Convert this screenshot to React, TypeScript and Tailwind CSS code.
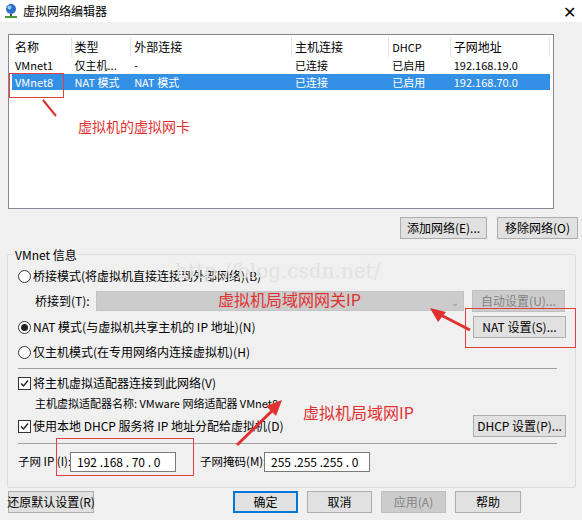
import React from "react";

const F = { fontFamily: '"Microsoft YaHei","Noto Sans CJK SC","Noto Sans",sans-serif' };

function Btn({ children, w, disabled, def }: { children: React.ReactNode; w: number; disabled?: boolean; def?: boolean }) {
  return (
    <div
      style={{ width: w }}
      className={`h-[22px] whitespace-nowrap flex items-center justify-center text-[12px] border ${def ? "border-[#0078d7] border-2" : "border-[#adadad]"} ${disabled ? "bg-[#cccccc] text-[#838383] border-[#bfbfbf]" : "bg-[#e1e1e1] text-black"}`}
    >
      {children}
    </div>
  );
}

function Radio({ on }: { on?: boolean }) {
  return (
    <div className="w-[13px] h-[13px] rounded-full border border-[#333] bg-white flex items-center justify-center mr-[2px]">
      {on && <div className="w-[7px] h-[7px] rounded-full bg-[#222]" />}
    </div>
  );
}
function Check() {
  return (
    <div className="w-[13px] h-[13px] border border-[#333] bg-white flex items-center justify-center mr-[2px]">
      <svg width="11" height="11" viewBox="0 0 11 11"><path d="M2 5.5 L4.5 8 L9 2.5" stroke="#222" strokeWidth="1.4" fill="none" /></svg>
    </div>
  );
}

export default function App() {
  const cols = [60, 60, 162, 98, 62, 100];
  return (
    <div style={F} className="relative w-[582px] h-[520px] bg-[#f0f0f0] text-[12px] text-black overflow-hidden whitespace-nowrap">
      <div className="h-[22px] bg-white flex items-center px-[4px]">
        <svg width="14" height="16" viewBox="0 0 14 16">
          <circle cx="7" cy="6" r="5" fill="#2b6fc9" />
          <circle cx="5.5" cy="4.5" r="2" fill="#9cc8f5" />
          <rect x="6" y="11" width="2" height="2" fill="#555" />
          <rect x="1" y="13" width="12" height="2" fill="#4a9a3a" />
        </svg>
        <span className="ml-[5px] text-[12px]">虚拟网络编辑器</span>
        <span className="ml-auto mr-[2px] text-[16px] font-light">✕</span>
      </div>
      <div className="px-[8px] pt-[12px]">
        <div className="w-[546px] h-[175px] bg-white border border-[#828790] pt-[2px] px-[3px]">
          <div className="flex h-[20px] items-center">
            {["名称", "类型", "外部连接", "主机连接", "DHCP", "子网地址"].map((h, i) => (
              <div key={h} style={{ width: cols[i] }} className={`h-full flex items-center pl-[3px] border-r border-[#e5e5e5] ${h === "DHCP" ? "text-[11px]" : ""}`}>{h}</div>
            ))}
          </div>
          <div className="flex h-[17px] items-center">
            {["VMnet1", "仅主机...", "-", "已连接", "已启用", "192.168.19.0"].map((h, i) => (
              <div key={i} style={{ width: cols[i] }} className="pl-[3px] text-[11px]">{h}</div>
            ))}
          </div>
          <div className="flex h-[16px] items-center bg-[#3390e5] text-white">
            {["VMnet8", "NAT 模式", "NAT 模式", "已连接", "已启用", "192.168.70.0"].map((h, i) => (
              <div key={i} style={{ width: cols[i] }} className="pl-[3px] text-[11px]">{h}</div>
            ))}
          </div>
        </div>
        <div className="flex justify-end gap-[10px] mt-[8px] mr-[-4px]">
          <Btn w={87}>添加网络(E)...</Btn>
          <Btn w={81}>移除网络(O)</Btn>
        </div>
        <div className="relative mt-[15px] w-[569px] ml-[-1px] h-[234px] border border-[#dcdcdc] rounded-[2px] px-[10px] pt-[10px]">
          <div className="absolute -top-[9px] left-[6px] bg-[#f0f0f0] px-[1px] text-[12px]">VMnet 信息</div>
          <div className="flex items-center h-[20px] mt-[1px]"><Radio />桥接模式(将虚拟机直接连接到外部网络)(B)</div>
          <div className="flex items-center h-[22px] mt-[4px]">
            <span className="ml-[17px] w-[62px]">桥接到(T):</span>
            <div className="w-[371px] h-[20px] bg-[#cccccc] border border-[#c4c4c4] flex items-center justify-end pr-[4px] text-[#999] text-[10px]">⌄</div>
            <div className="ml-[8px]"><Btn w={93} disabled>自动设置(U)...</Btn></div>
          </div>
          <div className="flex items-center h-[22px] mt-[4px]">
            <Radio on />NAT 模式(与虚拟机共享主机的 IP 地址)(N)
            <div className="ml-auto mr-[-1px]"><Btn w={93}>NAT 设置(S)...</Btn></div>
          </div>
          <div className="flex items-center h-[20px] mt-[4px]"><Radio />仅主机模式(在专用网络内连接虚拟机)(H)</div>
          <div className="h-px bg-[#a0a0a0] mt-[6px] mr-[8px]" />
          <div className="flex items-center h-[20px] mt-[4px]"><Check />将主机虚拟适配器连接到此网络(V)</div>
          <div className="h-[20px] flex items-center ml-[17px] text-[11px]">主机虚拟适配器名称: VMware 网络适配器 VMnet8</div>
          <div className="flex items-center h-[22px] mt-[2px]">
            <Check />使用本地 DHCP 服务将 IP 地址分配给虚拟机(D)
            <div className="ml-auto mr-[-1px]"><Btn w={93}>DHCP 设置(P)...</Btn></div>
          </div>
          <div className="h-px bg-[#a0a0a0] mt-[6px] mr-[8px]" />
          <div className="flex items-center h-[22px] mt-[7px]">
            <span className="w-[52px] text-[11.5px]">子网 IP (I):</span>
            <div className="w-[106px] h-[20px] bg-white border border-[#7a7a7a] flex items-center pl-[6px]">192 .168 . 70 . 0</div>
            <span className="ml-[24px] w-[64px] text-[11.5px]">子网掩码(M):</span>
            <div className="w-[106px] h-[20px] bg-white border border-[#7a7a7a] flex items-center pl-[6px]">255 .255 .255 . 0</div>
          </div>
        </div>
        <div className="flex items-center mt-[3px]">
          <Btn w={86}>还原默认设置(R)</Btn>
          <div className="ml-[139px] flex gap-[9px]">
            <Btn w={65} def>确定</Btn>
            <Btn w={65}>取消</Btn>
            <Btn w={65} disabled>应用(A)</Btn>
            <Btn w={66}>帮助</Btn>
          </div>
        </div>
      </div>

      {/* annotations */}
      <div className="absolute left-[175px] top-[256px] text-[20px] text-[#e2e2e2]" style={{ fontFamily: '"DejaVu Serif",serif' }}>http://blog.csdn.net/</div>
      <div className="absolute left-[9px] top-[73px] w-[55px] h-[25px] border border-[#e04040]" />
      <div className="absolute left-[465px] top-[308px] w-[111px] h-[40px] border border-[#e04040]" />
      <div className="absolute left-[56px] top-[438px] w-[138px] h-[38px] border border-[#e04040]" />
      <div className="absolute left-[78px] top-[116px] text-[14px] text-[#e03030]">虚拟机的虚拟网卡</div>
      <div className="absolute left-[218px] top-[287px] text-[16px] text-[#e03030]">虚拟机局域网网关IP</div>
      <div className="absolute left-[303px] top-[400px] text-[16px] text-[#e03030]">虚拟机局域网IP</div>
      <svg className="absolute left-0 top-0" width="582" height="520">
        <path d="M43 100 L56 116" stroke="#e03030" strokeWidth="2" />
        <path d="M433 311 L470 330" stroke="#e03030" strokeWidth="3" />
        <path d="M430 308 L446 312 L438 322 Z" fill="#e03030" />
        <path d="M237 445 L275 408" stroke="#e03030" strokeWidth="3" />
        <path d="M282 400 L266 406 L276 416 Z" fill="#e03030" />
      </svg>
    </div>
  );
}
